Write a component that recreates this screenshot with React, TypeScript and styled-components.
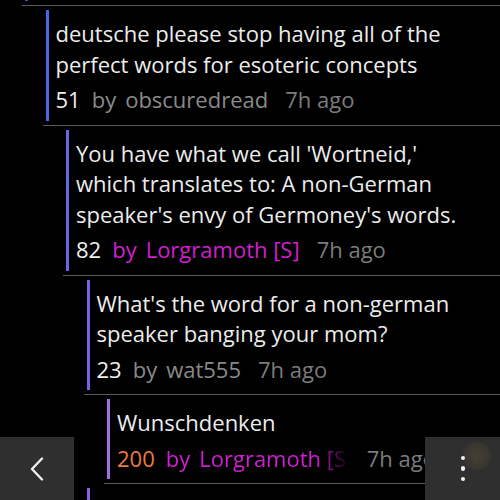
import * as React from "react";
import { createGlobalStyle, styled } from "styled-components";

type CommentData = {
    depth: number;
    bar: string;
    lines: string;
    score: string;
    scoreColor?: string;
    author: string;
    op?: boolean;
    fade?: boolean;
};

const comments: CommentData[] = [
    {
        depth: 1,
        bar: "#4a66e6",
        lines: "deutsche please stop having all of the perfect words for esoteric concepts",
        score: "51",
        author: "obscuredread",
    },
    {
        depth: 2,
        bar: "#6468e2",
        lines: "You have what we call 'Wortneid,' which translates to: A non-German speaker's envy of Germoney's words.",
        score: "82",
        author: "Lorgramoth [S]",
        op: true,
    },
    {
        depth: 3,
        bar: "#7a60e4",
        lines: "What's the word for a non-german speaker banging your mom?",
        score: "23",
        author: "wat555",
    },
    {
        depth: 4,
        bar: "#a46ee6",
        lines: "Wunschdenken",
        score: "200",
        scoreColor: "#ec7a44",
        author: "Lorgramoth [S]",
        op: true,
        fade: true,
    },
];

const GlobalStyle = createGlobalStyle`
    html, body {
        margin: 0;
        padding: 0;
        background: #000;
    }
    body {
        font-family: "Open Sans", "Noto Sans", sans-serif;
        color: #e8e8e8;
        overflow: hidden;
    }
`;

const Screen = styled.div`
    position: relative;
    width: 500px;
    height: 500px;
    overflow: hidden;
    background: #000;
`;

const Thread = styled.div`
    display: flex;
    flex-direction: column;
`;

const Row = styled.div<{ $depth: number }>`
    margin-left: ${p => 22 + p.$depth * 20.5}px;
    padding: 4px 0 4px 3px;
    border-bottom: 1px solid #5a5a5a;
`;

const Body = styled.div<{ $bar: string }>`
    border-left: 3px solid ${p => p.$bar};
    padding: 8px 20px 6px 7px;
`;

// Only the bar of a comment whose text lies outside the view.
const BarOnly = styled.div<{ $bar: string; $height: number }>`
    border-left: 3px solid ${p => p.$bar};
    height: ${p => p.$height}px;
`;

const Text = styled.div`
    font-size: 22px;
    line-height: 30.5px;
    color: #ececec;
`;

const Meta = styled.div`
    display: flex;
    align-items: baseline;
    gap: 11px;
    margin-top: 5px;
    font-size: 22px;
    line-height: 30.5px;
    white-space: nowrap;
`;

const Score = styled.span<{ $color?: string }>`
    color: ${p => p.$color ?? "#f0f0f0"};
`;

const Author = styled.span<{ $op?: boolean; $fade?: boolean }>`
    display: inline-flex;
    gap: 9px;
    color: ${p => (p.$op ? "#d21ed2" : "#8a8a8a")};
    overflow: hidden;
    max-width: ${p => (p.$fade ? "184px" : "none")};
    mask-image: ${p => (p.$fade ? "linear-gradient(to right, #000 150px, transparent 184px)" : "none")};
`;

const Time = styled.span`
    margin-left: 6px;
    color: #7c7c7c;
`;

const SidePanel = styled.div<{ $side: "left" | "right" }>`
    position: absolute;
    bottom: 0;
    ${p => p.$side}: 0;
    width: ${p => (p.$side === "left" ? 74 : 75)}px;
    height: 63px;
    background: #2f2f2f;
    display: flex;
    align-items: center;
    justify-content: center;
`;

const Glow = styled.div`
    position: absolute;
    top: 4px;
    right: 8px;
    width: 30px;
    height: 30px;
    border-radius: 50%;
    background: radial-gradient(circle, rgba(110, 95, 60, 0.35) 0%, rgba(90, 80, 50, 0.2) 60%, transparent 72%);
`;

const Dots = styled.div`
    position: relative;
    display: flex;
    flex-direction: column;
    gap: 6px;
    margin-left: 1px;
    span {
        width: 4.5px;
        height: 4.5px;
        border-radius: 50%;
        background: #f2f2f2;
    }
`;

const Comment = ({ c }: { c: CommentData }) => (
    <Row $depth={c.depth}>
        <Body $bar={c.bar}>
            <Text>{c.lines}</Text>
            <Meta>
                <Score $color={c.scoreColor}>{c.score}</Score>
                <Author $op={c.op} $fade={c.fade}>
                    <span>by</span>
                    <span>{c.author}</span>
                </Author>
                <Time>7h ago</Time>
            </Meta>
        </Body>
    </Row>
);

export default function App() {
    return (
        <Screen>
            <GlobalStyle />
            <Thread>
                <Row $depth={0} style={{ paddingTop: 0 }}>
                    <BarOnly $bar="#3c52d0" $height={1} />
                </Row>
                {comments.map((c, i) => (
                    <Comment key={i} c={c} />
                ))}
                <Row $depth={3}>
                    <BarOnly $bar="#8a62e4" $height={60} />
                </Row>
            </Thread>
            <SidePanel $side="left">
                <svg width="14" height="24" viewBox="0 0 14 24">
                    <path d="M12 1.5 L2 12 L12 22.5" fill="none" stroke="#f0f0f0" strokeWidth="2.4" strokeLinecap="round" strokeLinejoin="round" />
                </svg>
            </SidePanel>
            <SidePanel $side="right">
                <Glow />
                <Dots>
                    <span />
                    <span />
                    <span />
                </Dots>
            </SidePanel>
        </Screen>
    );
}
